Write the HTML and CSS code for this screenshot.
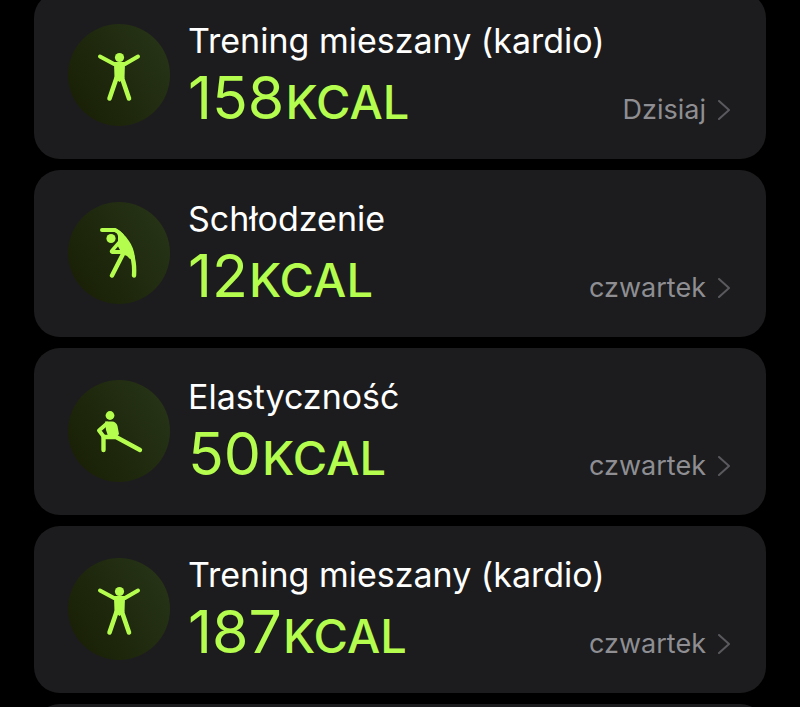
FILE: index.html
```
<!DOCTYPE html>
<html lang="pl">
<head>
<meta charset="utf-8">
<meta name="viewport" content="width=device-width, initial-scale=1">
<title>Treningi</title>
<link rel="stylesheet" href="styles.css">
</head>
<body>
<svg class="defs" aria-hidden="true">
  <symbol id="mixed" viewBox="0 0 102 102">
    <circle cx="51.500" cy="33.500" r="4.600" fill="currentColor"/>
    <path d="M32 32.500 46 40H57L70 32.500" fill="none" stroke="currentColor" stroke-width="4" stroke-linecap="round" stroke-linejoin="round"/>
    <path d="M46 39.500H57L56.500 54 51.500 58 46.500 54Z" fill="currentColor"/>
    <path d="M48.500 54 41.500 74.500M54 54 61 74.500" fill="none" stroke="currentColor" stroke-width="4.600" stroke-linecap="round"/>
  </symbol>
  <symbol id="cooldown" viewBox="0 0 102 102">
    <circle cx="43" cy="36.500" r="4.600" fill="currentColor"/>
    <path d="M34 28H47Q51 30 54 33.500" fill="none" stroke="currentColor" stroke-width="4" stroke-linecap="round" stroke-linejoin="round"/>
    <path fill-rule="evenodd" d="M47 26Q55 30 61 39 66 46 67 56L62 57 59 54 54 52H44Q40 50 43 47L50 39 50 34ZM47 48H52L50 44.500Z" fill="currentColor"/>
    <path d="M55 52 44 73.500M62 49Q67 58 66 73.500" fill="none" stroke="currentColor" stroke-width="4.400" stroke-linecap="round"/>
  </symbol>
  <symbol id="flex" viewBox="0 0 102 102">
    <circle cx="42" cy="35.500" r="4.400" fill="currentColor"/>
    <path d="M39 43.500 31 50.500 36 57" fill="none" stroke="currentColor" stroke-width="4" stroke-linecap="round" stroke-linejoin="round"/>
    <path d="M37 41.500H44Q48 41.500 49.500 46L51 54 47 59H41L38 50Z" fill="currentColor"/>
    <path d="M35.500 70V57H48L72 70" fill="none" stroke="currentColor" stroke-width="4.400" stroke-linecap="round" stroke-linejoin="round"/>
  </symbol>
  <symbol id="chevron" viewBox="0 0 12 20">
    <path d="M1 1 11 10 1 19" fill="none" stroke="currentColor" stroke-width="2" stroke-linecap="round" stroke-linejoin="round"/>
  </symbol>
</svg>
<main class="workouts">
  <a class="card" href="#">
    <svg class="badge"><use href="#mixed"/></svg>
    <div class="info">
      <div class="title">Trening mieszany (kardio)</div>
      <div class="energy">158<span class="unit">KCAL</span></div>
    </div>
    <div class="day">Dzisiaj<svg class="chevron"><use href="#chevron"/></svg></div>
  </a>
  <a class="card" href="#">
    <svg class="badge"><use href="#cooldown"/></svg>
    <div class="info">
      <div class="title">Schłodzenie</div>
      <div class="energy">12<span class="unit">KCAL</span></div>
    </div>
    <div class="day">czwartek<svg class="chevron"><use href="#chevron"/></svg></div>
  </a>
  <a class="card" href="#">
    <svg class="badge"><use href="#flex"/></svg>
    <div class="info">
      <div class="title">Elastyczność</div>
      <div class="energy">50<span class="unit">KCAL</span></div>
    </div>
    <div class="day">czwartek<svg class="chevron"><use href="#chevron"/></svg></div>
  </a>
  <a class="card" href="#">
    <svg class="badge"><use href="#mixed"/></svg>
    <div class="info">
      <div class="title">Trening mieszany (kardio)</div>
      <div class="energy">187<span class="unit">KCAL</span></div>
    </div>
    <div class="day">czwartek<svg class="chevron"><use href="#chevron"/></svg></div>
  </a>
  <div class="card"></div>
</main>
</body>
</html>
```
FILE: styles.css
```
* {
  box-sizing: border-box;
}

body {
  margin: 0;
  height: 100vh;
  overflow: hidden;
  background: #000;
  font-family: Inter, "Liberation Sans", sans-serif;
}

.defs {
  display: none;
}

.workouts {
  display: flex;
  flex-direction: column;
  gap: 11px;
  height: calc(100vh + 8px);
  margin-top: -8px;
  padding: 0 34px;
  overflow: hidden;
}

.card {
  display: flex;
  flex: none;
  align-items: center;
  gap: 18px;
  min-height: 167px;
  padding: 18px 36px 20px 34px;
  border-radius: 26px;
  background: #1c1c1e;
  color: #fff;
  text-decoration: none;
}

.badge {
  flex: none;
  width: 102px;
  height: 102px;
  border-radius: 50%;
  background: linear-gradient(60deg, #171d04, #283618);
  color: #b4fc4e;
}

.info {
  flex: 1;
  min-width: 0;
  padding-bottom: 2px;
  white-space: nowrap;
}

.title {
  font-size: 34px;
  line-height: 48px;
}

.energy {
  font-size: 59px;
  line-height: 66px;
  color: #b4fc4e;
}

.unit {
  margin-left: 1px;
  font-size: 47px;
  font-weight: 500;
  line-height: 1;
}

.day {
  display: flex;
  align-items: center;
  align-self: flex-end;
  gap: 12px;
  font-size: 27px;
  line-height: 34px;
  padding-bottom: 12px;
  color: #8e8e93;
}

.chevron {
  width: 12px;
  height: 20px;
  color: #5a5a5e;
}
```
